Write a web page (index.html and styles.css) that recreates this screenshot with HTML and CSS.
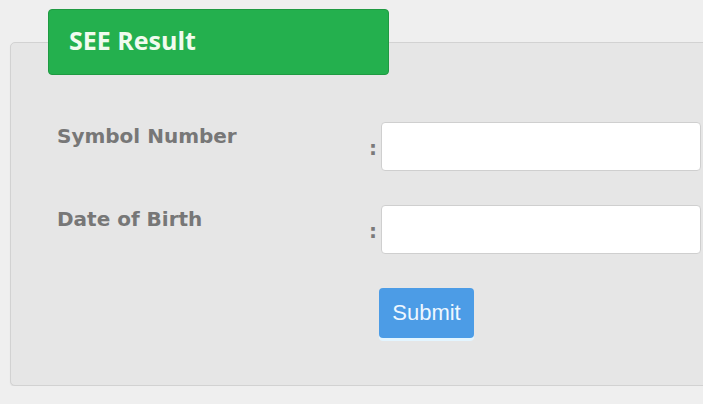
FILE: index.html
```html
<!DOCTYPE html>
<html lang="en">
<head>
    <meta charset="UTF-8">
    <meta name="viewport" content="width=device-width, initial-scale=1.0">
    <title>SEE Result</title>
    <link rel="stylesheet" href="styles.css">
</head>
<body>
    <div class="wrap">
        <div class="title">SEE Result</div>
        <form class="panel" onsubmit="return false;">
            <div class="row">
                <label class="label" for="symbol">Symbol Number</label>
                <span class="colon">:</span>
                <input class="field" type="text" id="symbol">
            </div>
            <div class="row">
                <label class="label" for="dob">Date of Birth</label>
                <span class="colon">:</span>
                <input class="field" type="text" id="dob">
            </div>
            <div class="row">
                <span class="label"></span>
                <span class="colon"></span>
                <button class="submit" type="submit">Submit</button>
            </div>
        </form>
    </div>
</body>
</html>
```

FILE: styles.css
```css
/* Page */
body { margin: 0; background: #efefef; overflow: hidden; }
.wrap { padding-top: 9px; width: 720px; }

/* Green heading tab */
.title { position: relative; z-index: 1; margin-left: 48px; width: 319px; height: 64px; padding-left: 20px; line-height: 60px; background: #24b04e; border: 1px solid #1f9a42; border-radius: 4px; color: #f1fbef; font-family: "Open Sans", sans-serif; font-weight: 700; font-size: 25px; }

/* Form panel */
.panel { margin: -33px 0 0 10px; width: 710px; height: 344px; box-sizing: border-box; padding: 79px 0 0 46px; background: #e6e6e6; border: 1px solid #d2d2d2; border-radius: 5px; box-shadow: 0 1px 1px #dcdcdc; }
.row { display: flex; margin-bottom: 34px; }
.label { width: 312px; padding-top: 2px; color: #777; font-family: "DejaVu Sans", Verdana, sans-serif; font-weight: 700; font-size: 20px; }
.colon { width: 12px; padding-top: 14px; color: #7a7a7a; font-family: "DejaVu Sans", sans-serif; font-weight: 700; font-size: 20px; }
.field { width: 320px; height: 49px; box-sizing: border-box; margin: 0; background: #fff; border: 1px solid #cfcfcf; border-radius: 4px; }
.submit { margin: 0 0 0 -2px; width: 95px; height: 50px; padding: 0; background: #4c9ce6; color: #eef7ff; border: 0; border-radius: 4px; box-shadow: 0 3px 0 #e3f5ff; font-family: "Liberation Sans", Arial, sans-serif; font-size: 22px; }
```
